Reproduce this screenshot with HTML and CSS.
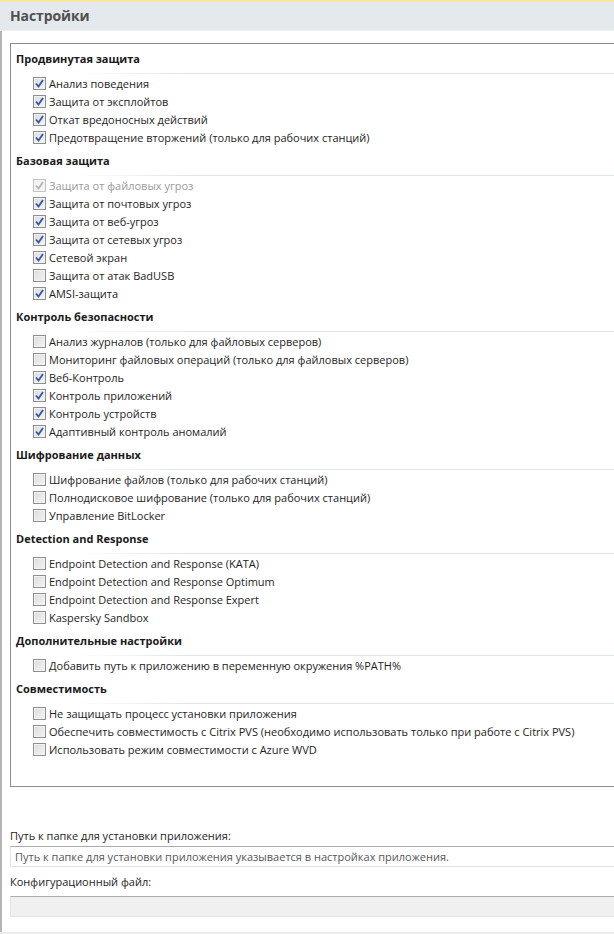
FILE: index.html
```html
<!DOCTYPE html>
<html lang="ru">
<head>
<meta charset="utf-8">
<title>Настройки</title>
<link rel="stylesheet" href="styles.css">
</head>
<body>
<div class="titlebar"><h1 class="title">Настройки</h1></div>
<div class="page">
  <div class="groupbox">
    <div class="sec">
      <div class="sec-head"><span class="sec-title">Продвинутая защита</span><i class="rule"></i></div>
      <div class="item"><span class="cb on"><svg viewBox="0 0 13 13"><polyline points="3,6.5 5.5,9.5 10,3"/></svg></span><span>Анализ поведения</span></div>
      <div class="item"><span class="cb on"><svg viewBox="0 0 13 13"><polyline points="3,6.5 5.5,9.5 10,3"/></svg></span><span>Защита от эксплойтов</span></div>
      <div class="item"><span class="cb on"><svg viewBox="0 0 13 13"><polyline points="3,6.5 5.5,9.5 10,3"/></svg></span><span>Откат вредоносных действий</span></div>
      <div class="item"><span class="cb on"><svg viewBox="0 0 13 13"><polyline points="3,6.5 5.5,9.5 10,3"/></svg></span><span>Предотвращение вторжений (только для рабочих станций)</span></div>
    </div>
    <div class="sec">
      <div class="sec-head"><span class="sec-title">Базовая защита</span><i class="rule"></i></div>
      <div class="item disabled"><span class="cb on"><svg viewBox="0 0 13 13"><polyline points="3,6.5 5.5,9.5 10,3"/></svg></span><span>Защита от файловых угроз</span></div>
      <div class="item"><span class="cb on"><svg viewBox="0 0 13 13"><polyline points="3,6.5 5.5,9.5 10,3"/></svg></span><span>Защита от почтовых угроз</span></div>
      <div class="item"><span class="cb on"><svg viewBox="0 0 13 13"><polyline points="3,6.5 5.5,9.5 10,3"/></svg></span><span>Защита от веб-угроз</span></div>
      <div class="item"><span class="cb on"><svg viewBox="0 0 13 13"><polyline points="3,6.5 5.5,9.5 10,3"/></svg></span><span>Защита от сетевых угроз</span></div>
      <div class="item"><span class="cb on"><svg viewBox="0 0 13 13"><polyline points="3,6.5 5.5,9.5 10,3"/></svg></span><span>Сетевой экран</span></div>
      <div class="item"><span class="cb"></span><span>Защита от атак BadUSB</span></div>
      <div class="item"><span class="cb on"><svg viewBox="0 0 13 13"><polyline points="3,6.5 5.5,9.5 10,3"/></svg></span><span>AMSI-защита</span></div>
    </div>
    <div class="sec">
      <div class="sec-head"><span class="sec-title">Контроль безопасности</span><i class="rule"></i></div>
      <div class="item"><span class="cb"></span><span>Анализ журналов (только для файловых серверов)</span></div>
      <div class="item"><span class="cb"></span><span>Мониторинг файловых операций (только для файловых серверов)</span></div>
      <div class="item"><span class="cb on"><svg viewBox="0 0 13 13"><polyline points="3,6.5 5.5,9.5 10,3"/></svg></span><span>Веб-Контроль</span></div>
      <div class="item"><span class="cb on"><svg viewBox="0 0 13 13"><polyline points="3,6.5 5.5,9.5 10,3"/></svg></span><span>Контроль приложений</span></div>
      <div class="item"><span class="cb on"><svg viewBox="0 0 13 13"><polyline points="3,6.5 5.5,9.5 10,3"/></svg></span><span>Контроль устройств</span></div>
      <div class="item"><span class="cb on"><svg viewBox="0 0 13 13"><polyline points="3,6.5 5.5,9.5 10,3"/></svg></span><span>Адаптивный контроль аномалий</span></div>
    </div>
    <div class="sec">
      <div class="sec-head"><span class="sec-title">Шифрование данных</span><i class="rule"></i></div>
      <div class="item"><span class="cb"></span><span>Шифрование файлов (только для рабочих станций)</span></div>
      <div class="item"><span class="cb"></span><span>Полнодисковое шифрование (только для рабочих станций)</span></div>
      <div class="item"><span class="cb"></span><span>Управление BitLocker</span></div>
    </div>
    <div class="sec">
      <div class="sec-head"><span class="sec-title">Detection and Response</span><i class="rule"></i></div>
      <div class="item"><span class="cb"></span><span>Endpoint Detection and Response (KATA)</span></div>
      <div class="item"><span class="cb"></span><span>Endpoint Detection and Response Optimum</span></div>
      <div class="item"><span class="cb"></span><span>Endpoint Detection and Response Expert</span></div>
      <div class="item"><span class="cb"></span><span>Kaspersky Sandbox</span></div>
    </div>
    <div class="sec">
      <div class="sec-head"><span class="sec-title">Дополнительные настройки</span><i class="rule"></i></div>
      <div class="item"><span class="cb"></span><span>Добавить путь к приложению в переменную окружения %PATH%</span></div>
    </div>
    <div class="sec">
      <div class="sec-head"><span class="sec-title">Совместимость</span><i class="rule"></i></div>
      <div class="item"><span class="cb"></span><span>Не защищать процесс установки приложения</span></div>
      <div class="item"><span class="cb"></span><span>Обеспечить совместимость с Citrix PVS (необходимо использовать только при работе с Citrix PVS)</span></div>
      <div class="item"><span class="cb"></span><span>Использовать режим совместимости с Azure WVD</span></div>
    </div>
  </div>
  <div class="field-label first">Путь к папке для установки приложения:</div>
  <div class="textbox">Путь к папке для установки приложения указывается в настройках приложения.</div>
  <div class="field-label">Конфигурационный файл:</div>
  <div class="textbox disabled"></div>
</div>
<div class="bottom-strip"></div>
</body>
</html>
```

FILE: styles.css
```css
html, body {
  margin: 0;
  padding: 0;
  background: #ffffff;
}
body {
  font-family: "Open Sans", "Noto Sans", "DejaVu Sans", sans-serif;
  font-size: 11px;
  color: #1e1e1e;
  width: 614px;
  height: 934px;
  overflow: hidden;
  display: flex;
  flex-direction: column;
}
.titlebar {
  height: 28px;
  border-top: 2px solid #fce7a2;
  background: #e4e9ed;
  border-bottom: 1px solid #eef0f2;
  display: flex;
  align-items: center;
  padding-left: 10px;
  flex: none;
}
.title {
  margin: 0;
  font-size: 14px;
  font-weight: 700;
  color: #505050;
  line-height: 20px;
  letter-spacing: -0.1px;
}
.page {
  flex: 1;
  border-left: 2px solid #b4b4b4;
  padding: 12px 0 0 8px;
  display: flex;
  flex-direction: column;
  min-height: 0;
}
.groupbox {
  border: 1px solid #8c8c96;
  margin-right: -20px;
  padding: 0 0 28px 5px;
}
.sec-head {
  height: 30px;
  display: flex;
  flex-direction: column;
}
.sec-title {
  margin-top: 6px;
  line-height: 18px;
  font-weight: 700;
  color: #1a1a1a;
}
.rule {
  display: block;
  margin-top: 5px;
  height: 1px;
  background: linear-gradient(to right, rgba(226,232,232,0) 0, rgba(226,232,232,0) 60px, #dfe6e6 170px, #dfe6e6 100%);
}
.item {
  height: 18px;
  display: flex;
  align-items: center;
  padding-left: 17px;
  color: #1e1e1e;
  white-space: nowrap;
}
.item.disabled {
  color: #9a9a9a;
}
.cb {
  width: 11px;
  height: 11px;
  border: 1px solid #8e8f8f;
  background: linear-gradient(135deg, #dcdcdc 0%, #f4f4f4 100%);
  box-shadow: inset 0 0 0 1px #f2f2f2;
  margin-right: 3px;
  position: relative;
  flex: none;
}
.cb svg {
  position: absolute;
  left: -1px;
  top: -1px;
  width: 13px;
  height: 13px;
}
.cb svg polyline {
  fill: none;
  stroke: #3858a4;
  stroke-width: 1.9;
}
.item.disabled .cb {
  border-color: #c4c4c4;
  background: #f4f4f4;
}
.item.disabled .cb svg polyline {
  stroke: #b4b4b4;
}
.field-label {
  margin-top: 7px;
  line-height: 16px;
  color: #1e1e1e;
  padding-left: 0;
}
.field-label.first {
  margin-top: 41px;
}
.textbox {
  margin-top: 2px;
  height: 19px;
  border: 1px solid #e3e3ea;
  border-top-color: #ababab;
  background: #ffffff;
  margin-right: -10px;
  padding-left: 4px;
  line-height: 19px;
  color: #575757;
  white-space: nowrap;
}
.textbox.disabled {
  margin-top: 6px;
  background: #f0f0f0;
}
.bottom-strip {
  height: 2px;
  background: #ececec;
  flex: none;
}
```
